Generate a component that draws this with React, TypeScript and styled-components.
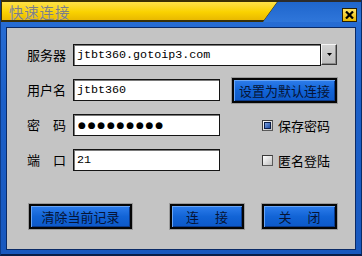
import React from "react";
import styled, { createGlobalStyle } from "styled-components";

const GlobalStyle = createGlobalStyle`
  html, body { margin: 0; padding: 0; background: #ffffff; }
  body { font-family: "Noto Sans CJK SC", "Noto Sans", sans-serif; }
`;

const Window = styled.div`
  width: 362px;
  height: 256px;
  box-sizing: border-box;
  display: flex;
  flex-direction: column;
  background: linear-gradient(#2a70d6, #1b5fc8 40%, #1858be);
  border-left: 1px solid #0d3c8a;
  border-right: 1px solid #0a2c66;
  border-bottom: 2px solid #081e48;
`;

const TitleBar = styled.div`
  height: 22px;
  flex-shrink: 0;
  display: flex;
  align-items: flex-start;
  background: linear-gradient(#2c2c2c 0 2px, #1f66cc 2px, #2f76da 100%);
`;

const TabEdge = styled.div`
  width: 278px;
  height: 22px;
  display: flex;
  background: #3a3006;
  clip-path: polygon(0 0, 100% 0, calc(100% - 16px) 100%, 0 100%);
`;

const TabFace = styled.div`
  flex: 1;
  margin: 2px 0 2px 1px;
  padding-left: 7px;
  display: flex;
  align-items: center;
  background: linear-gradient(#ffe24a, #fad200 55%, #e9b900);
  clip-path: polygon(0 0, calc(100% - 2px) 0, calc(100% - 15px) 100%, 0 100%);
  font-size: 14.5px;
  letter-spacing: 0.8px;
  color: #7e7e7e;
  text-shadow: 0 0 1px #e8e0a0;
`;

const CloseButton = styled.div`
  margin: 8px 4px 0 auto;
  width: 15px;
  height: 14px;
  box-sizing: border-box;
  border: 1px solid #2a2000;
  background: linear-gradient(#ffe466, #e8b800);
  display: flex;
  align-items: center;
  justify-content: center;
`;

const Panel = styled.div`
  flex: 1;
  margin: 5px 5px 4px 5px;
  padding: 16px 0 0 20px;
  display: flex;
  flex-direction: column;
  background: #c4c4c4;
  border: 1px solid #0a2a66;
`;

const Form = styled.div`
  display: grid;
  grid-template-columns: 46px 147px 12px 105px;
  grid-auto-rows: 22px;
  row-gap: 13px;
  align-items: center;
`;

const Label = styled.span`
  grid-column: 1;
  font-size: 13px;
  line-height: 22px;
  color: #000;
  white-space: pre;
`;

const Combo = styled.div`
  grid-column: 2 / 5;
  display: flex;
  height: 22px;
`;

const TextBox = styled.input<{ $mask?: boolean }>`
  grid-column: 2;
  width: 100%;
  min-width: 0;
  flex: 1;
  height: 22px;
  box-sizing: border-box;
  margin: 0;
  padding: 0 0 0 ${(p) => (p.$mask ? "4px" : "3px")};
  border: 1px solid #141414;
  box-shadow: inset 1px 1px 0 #7a7a7a;
  background: #fff;
  outline: none;
  color: #000;
  font-family: ${(p) => (p.$mask ? '"DejaVu Sans", sans-serif' : '"Liberation Mono", monospace')};
  font-size: ${(p) => (p.$mask ? "9px" : "11.7px")};
  letter-spacing: ${(p) => (p.$mask ? "1.8px" : "0")};
`;

const DropButton = styled.div`
  width: 16px;
  height: 21px;
  box-sizing: border-box;
  background: linear-gradient(#d4d4d4, #bcbcbc);
  border-top: 1px solid #f4f4f4;
  border-left: 1px solid #f4f4f4;
  border-right: 1px solid #3a3a3a;
  border-bottom: 1px solid #3a3a3a;
  box-shadow: inset -1px -1px 0 #8a8a8a;
  display: flex;
  align-items: center;
  justify-content: center;
`;

const Button = styled.button<{ $w: number; $ml?: number }>`
  width: ${(p) => p.$w}px;
  margin: 0 0 0 ${(p) => p.$ml ?? 0}px;
  height: 25px;
  box-sizing: border-box;
  padding: 0;
  border: 2px solid #050505;
  background: linear-gradient(#2e7eec, #1264d6 50%, #0c58c8);
  box-shadow: inset 1px 1px 0 #6aa6f6, inset -1px -1px 0 #0a3a8c, 0 0 0 1px #9a9a9a;
  font-family: "Noto Sans CJK SC", "Noto Sans", sans-serif;
  font-size: 13px;
  color: #061436;
  white-space: pre;
  cursor: pointer;
`;

const SideButton = styled(Button)`
  grid-column: 4;
  align-self: center;
`;

const CheckRow = styled.label`
  grid-column: 4;
  margin-left: 30px;
  display: flex;
  align-items: center;
  gap: 5px;
  font-size: 13px;
  color: #000;
`;

const Box = styled.span<{ $checked?: boolean }>`
  width: 11px;
  height: 11px;
  box-sizing: border-box;
  border-top: 1px solid #3a3a3a;
  border-left: 1px solid #3a3a3a;
  border-right: 1px solid #5a5a5a;
  border-bottom: 1px solid #5a5a5a;
  background: linear-gradient(135deg, #ffffff, #c0c0c0);
  display: flex;
  align-items: center;
  justify-content: center;
  &::after {
    content: "";
    display: ${(p) => (p.$checked ? "block" : "none")};
    width: 5px;
    height: 5px;
    border: 1px solid #0c1e48;
    background: linear-gradient(135deg, #7aa0e0, #1c4aa0);
  }
`;

const ButtonRow = styled.div`
  display: flex;
  margin-top: 33px;
  padding-left: 2px;
`;

export default function App() {
  return (
    <>
      <GlobalStyle />
      <Window>
        <TitleBar>
          <TabEdge>
            <TabFace>快速连接</TabFace>
          </TabEdge>
          <CloseButton>
            <svg width="9" height="8" viewBox="0 0 9 8">
              <path d="M1 0.5 L8 7.5 M8 0.5 L1 7.5" stroke="#000" strokeWidth="2.2" />
            </svg>
          </CloseButton>
        </TitleBar>
        <Panel>
          <Form>
            <Label>服务器</Label>
            <Combo>
              <TextBox readOnly defaultValue="jtbt360.gotoip3.com" />
              <DropButton>
                <svg width="5" height="3" viewBox="0 0 5 3">
                  <path d="M0 0 H5 L2.5 3 Z" fill="#000" />
                </svg>
              </DropButton>
            </Combo>

            <Label>用户名</Label>
            <TextBox readOnly defaultValue="jtbt360" />
            <SideButton $w={105}>设置为默认连接</SideButton>

            <Label>密　码</Label>
            <TextBox readOnly $mask defaultValue="●●●●●●●●●" />
            <CheckRow>
              <Box $checked />
              保存密码
            </CheckRow>

            <Label>端　口</Label>
            <TextBox readOnly defaultValue="21" />
            <CheckRow>
              <Box />
              匿名登陆
            </CheckRow>
          </Form>
          <ButtonRow>
            <Button $w={103}>清除当前记录</Button>
            <Button $w={74} $ml={38}>连　 接</Button>
            <Button $w={75} $ml={18}>关　 闭</Button>
          </ButtonRow>
        </Panel>
      </Window>
    </>
  );
}
